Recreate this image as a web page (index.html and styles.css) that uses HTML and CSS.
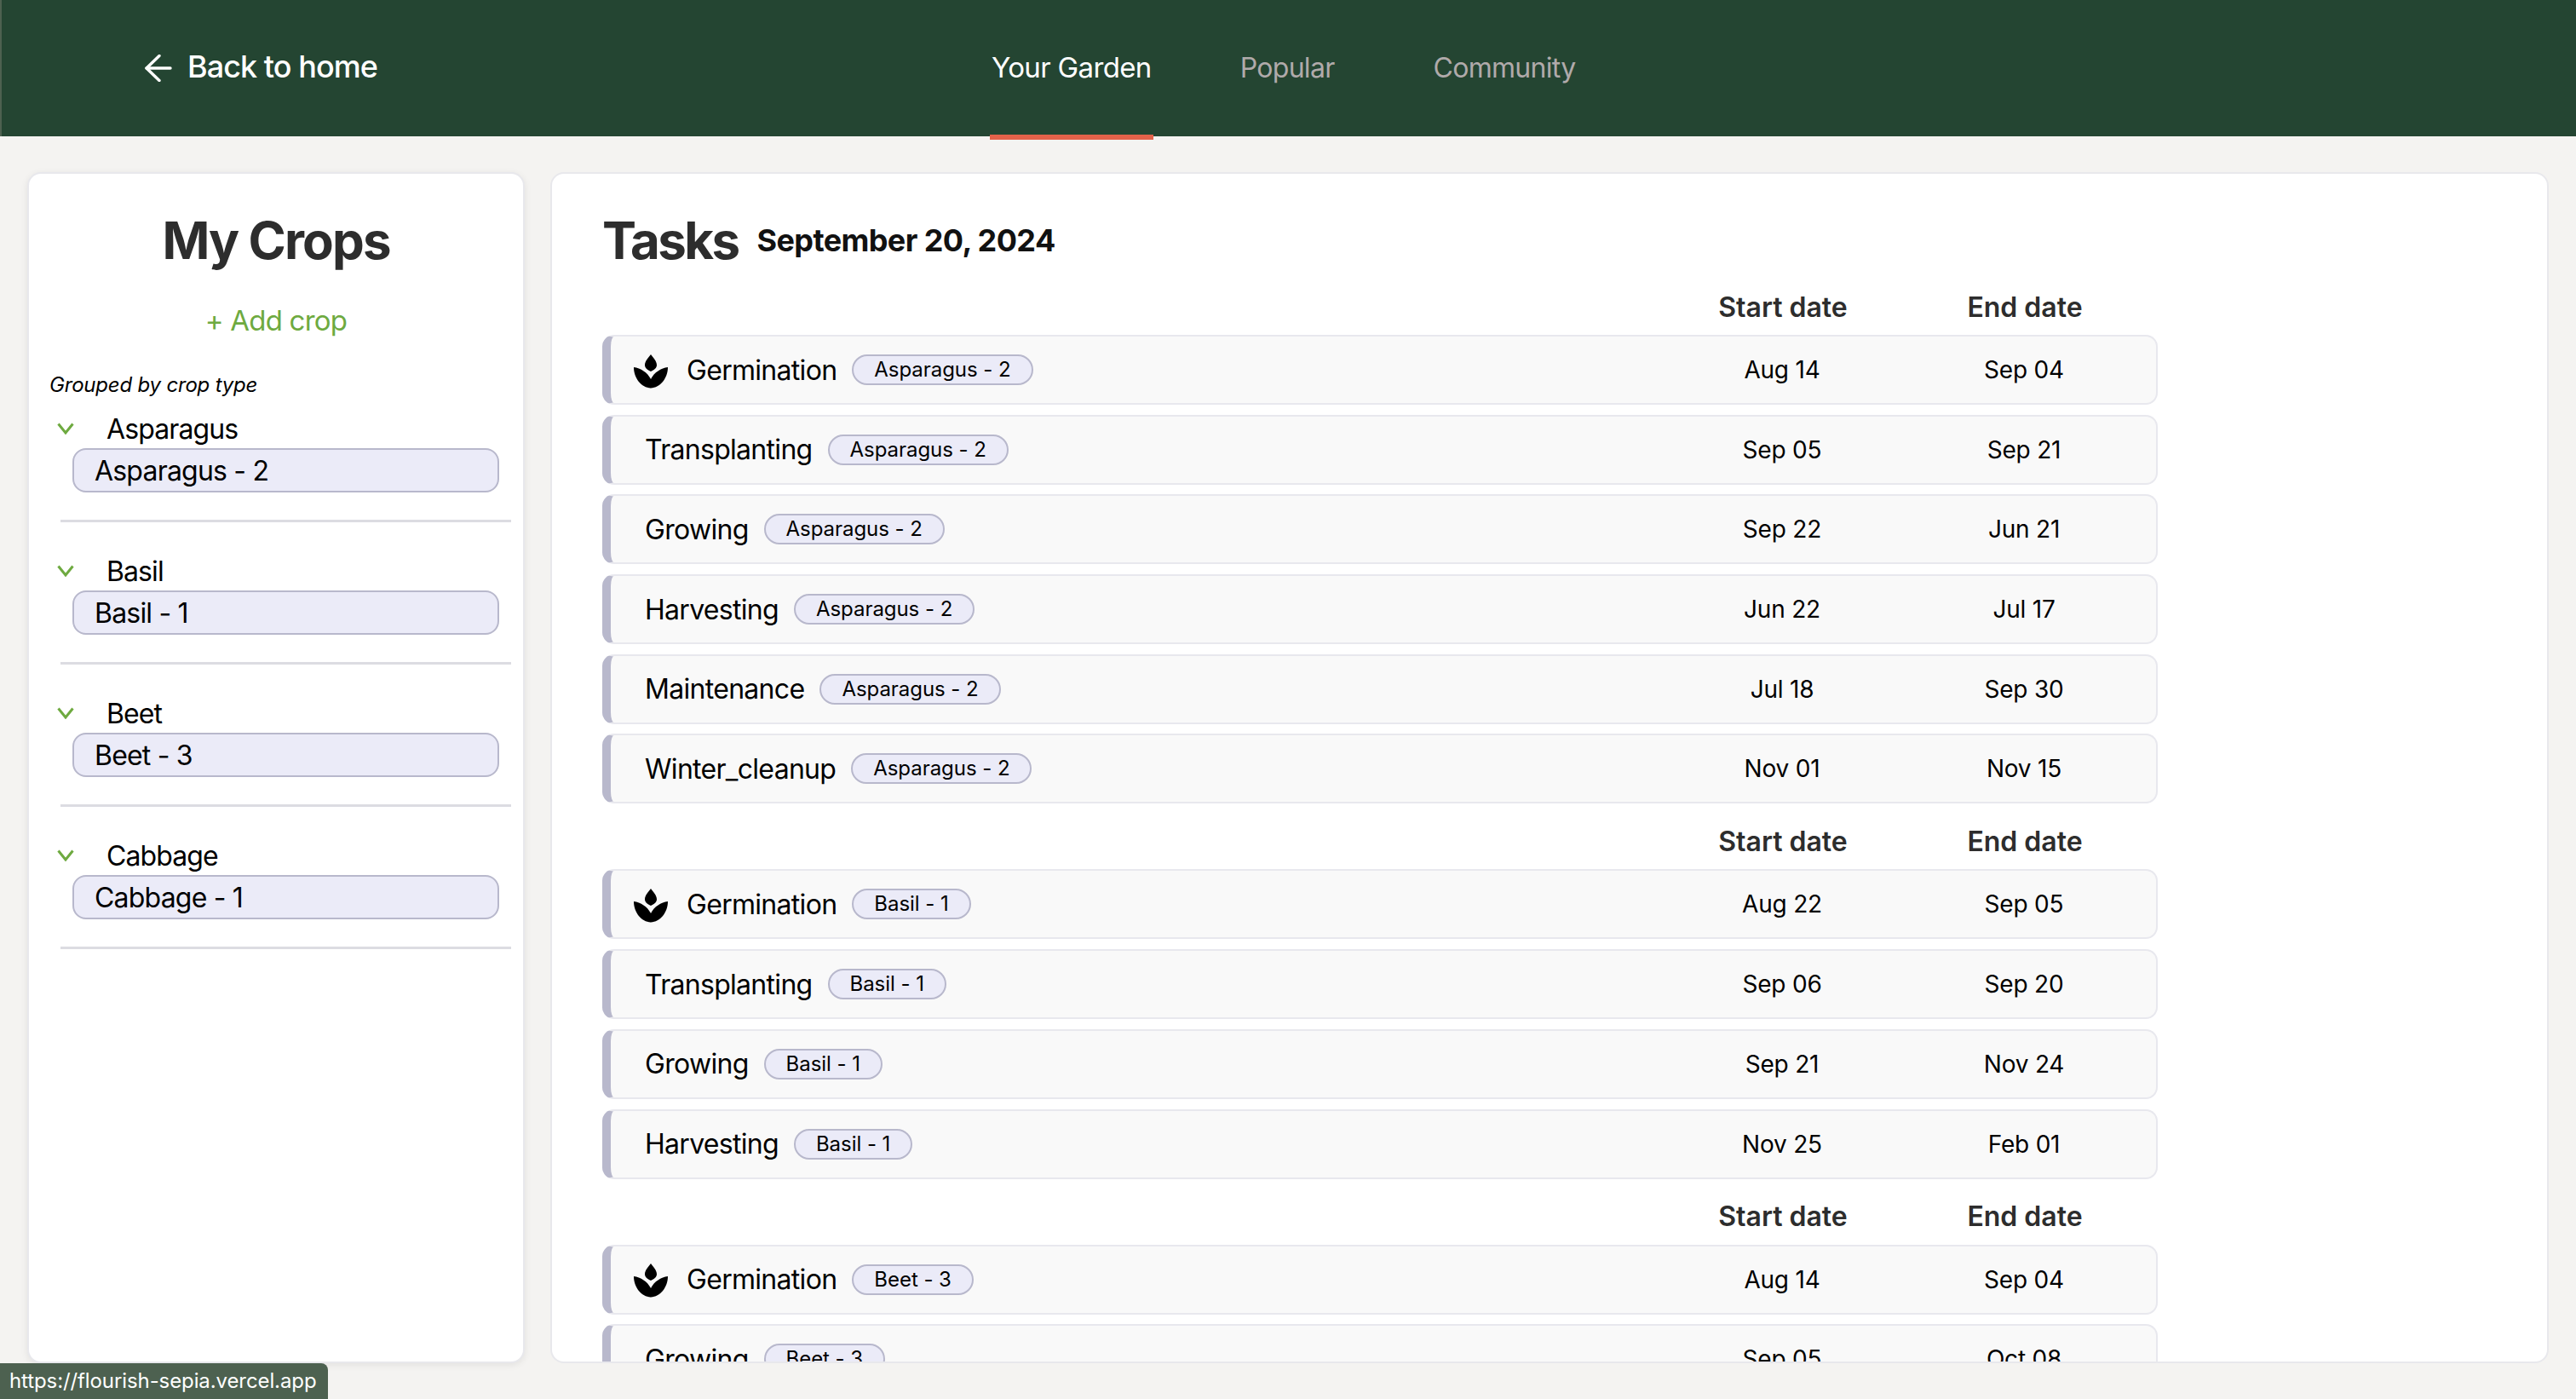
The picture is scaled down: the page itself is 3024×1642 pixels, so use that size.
FILE: index.html
```html
<!DOCTYPE html>
<html lang="en">
<head>
  <meta charset="UTF-8">
  <meta name="viewport" content="width=device-width, initial-scale=1.0">
  <title>Your Garden</title>
  <link rel="stylesheet" href="styles.css">
</head>
<body>

<header class="topbar">
  <a class="back-link" href="#">
    <svg class="back-arrow" viewBox="0 0 32 32" fill="none" stroke="#fff" stroke-width="3.400" stroke-linecap="round" stroke-linejoin="round"><path d="M30 16H2"/><path d="M17 1.500 2 16 17 30.500"/></svg>
    Back to home
  </a>
  <nav class="tabs">
    <a class="tab tab-active" href="#">Your Garden</a>
    <a class="tab" href="#">Popular</a>
    <a class="tab tab-last" href="#">Community</a>
  </nav>
</header>

<main class="content">
  <aside class="card sidebar">
    <h1 class="sidebar-title">My Crops</h1>
    <a class="add-crop" href="#">+ Add crop</a>
    <p class="group-note">Grouped by crop type</p>

    <section class="crop-group">
      <div class="crop-type">
        <svg class="chevron" viewBox="0 0 20 14" fill="none" stroke="#6eaa40" stroke-width="3"><path d="M1.500 1.500 10 12 18.500 1.500"/></svg>
        Asparagus
      </div>
      <div class="crop-item">Asparagus - 2</div>
    </section>
    <section class="crop-group">
      <div class="crop-type">
        <svg class="chevron" viewBox="0 0 20 14" fill="none" stroke="#6eaa40" stroke-width="3"><path d="M1.500 1.500 10 12 18.500 1.500"/></svg>
        Basil
      </div>
      <div class="crop-item">Basil - 1</div>
    </section>
    <section class="crop-group">
      <div class="crop-type">
        <svg class="chevron" viewBox="0 0 20 14" fill="none" stroke="#6eaa40" stroke-width="3"><path d="M1.500 1.500 10 12 18.500 1.500"/></svg>
        Beet
      </div>
      <div class="crop-item">Beet - 3</div>
    </section>
    <section class="crop-group">
      <div class="crop-type">
        <svg class="chevron" viewBox="0 0 20 14" fill="none" stroke="#6eaa40" stroke-width="3"><path d="M1.500 1.500 10 12 18.500 1.500"/></svg>
        Cabbage
      </div>
      <div class="crop-item">Cabbage - 1</div>
    </section>
  </aside>

  <section class="card tasks">
    <div class="tasks-head">
      <h1 class="tasks-title">Tasks</h1>
      <span class="tasks-date">September 20, 2024</span>
    </div>

    <div class="task-group">
      <div class="task-cols"><span class="cols-spacer"></span><span>Start date</span><span>End date</span></div>
      <div class="task-row">
        <div class="task-name">
          <svg class="sprout" viewBox="0 0 40 40" fill="#000"><path d="M20 0C23 4 27 8 27 12.500 27 16 24 18 20 20 16 18 13 16 13 12.500 13 8 17 4 20 0Z"/><path d="M0 15C8 16 16 21 20 29 24 21 32 16 40 15 40 28 31 39 20 39.500 9 39 0 28 0 15Z"/></svg>
          Germination <span class="crop-tag">Asparagus - 2</span>
        </div>
        <span>Aug 14</span><span>Sep 04</span>
      </div>
      <div class="task-row"><div class="task-name task-plain">Transplanting <span class="crop-tag">Asparagus - 2</span></div><span>Sep 05</span><span>Sep 21</span></div>
      <div class="task-row"><div class="task-name task-plain">Growing <span class="crop-tag">Asparagus - 2</span></div><span>Sep 22</span><span>Jun 21</span></div>
      <div class="task-row"><div class="task-name task-plain">Harvesting <span class="crop-tag">Asparagus - 2</span></div><span>Jun 22</span><span>Jul 17</span></div>
      <div class="task-row"><div class="task-name task-plain">Maintenance <span class="crop-tag">Asparagus - 2</span></div><span>Jul 18</span><span>Sep 30</span></div>
      <div class="task-row"><div class="task-name task-plain">Winter_cleanup <span class="crop-tag">Asparagus - 2</span></div><span>Nov 01</span><span>Nov 15</span></div>
    </div>

    <div class="task-group">
      <div class="task-cols"><span class="cols-spacer"></span><span>Start date</span><span>End date</span></div>
      <div class="task-row">
        <div class="task-name">
          <svg class="sprout" viewBox="0 0 40 40" fill="#000"><path d="M20 0C23 4 27 8 27 12.500 27 16 24 18 20 20 16 18 13 16 13 12.500 13 8 17 4 20 0Z"/><path d="M0 15C8 16 16 21 20 29 24 21 32 16 40 15 40 28 31 39 20 39.500 9 39 0 28 0 15Z"/></svg>
          Germination <span class="crop-tag">Basil - 1</span>
        </div>
        <span>Aug 22</span><span>Sep 05</span>
      </div>
      <div class="task-row"><div class="task-name task-plain">Transplanting <span class="crop-tag">Basil - 1</span></div><span>Sep 06</span><span>Sep 20</span></div>
      <div class="task-row"><div class="task-name task-plain">Growing <span class="crop-tag">Basil - 1</span></div><span>Sep 21</span><span>Nov 24</span></div>
      <div class="task-row"><div class="task-name task-plain">Harvesting <span class="crop-tag">Basil - 1</span></div><span>Nov 25</span><span>Feb 01</span></div>
    </div>

    <div class="task-group">
      <div class="task-cols"><span class="cols-spacer"></span><span>Start date</span><span>End date</span></div>
      <div class="task-row">
        <div class="task-name">
          <svg class="sprout" viewBox="0 0 40 40" fill="#000"><path d="M20 0C23 4 27 8 27 12.500 27 16 24 18 20 20 16 18 13 16 13 12.500 13 8 17 4 20 0Z"/><path d="M0 15C8 16 16 21 20 29 24 21 32 16 40 15 40 28 31 39 20 39.500 9 39 0 28 0 15Z"/></svg>
          Germination <span class="crop-tag">Beet - 3</span>
        </div>
        <span>Aug 14</span><span>Sep 04</span>
      </div>
      <div class="task-row"><div class="task-name task-plain">Growing <span class="crop-tag">Beet - 3</span></div><span>Sep 05</span><span>Oct 08</span></div>
    </div>
  </section>
</main>

<div class="status-url">https://flourish-sepia.vercel.app</div>

</body>
</html>
```

FILE: styles.css
```css
* {
  box-sizing: border-box;
}

html, body {
  height: 100%;
}

body {
  font-family: Inter, "Liberation Sans", sans-serif;
  background-color: #f4f3f1;
  color: #000;
  margin: 0;
  overflow: hidden;
}

a {
  text-decoration: none;
  color: inherit;
}

h1, p {
  margin: 0;
}

/* top bar */
.topbar {
  display: flex;
  height: 160px;
  background-color: #244532;
  border-left: 2px solid #4d6150;
}

.back-link {
  display: flex;
  align-items: center;
  gap: 18px;
  width: 990px;
  height: 156px;
  padding-left: 168px;
  color: #fff;
  font-size: 36px;
  font-weight: 500;
  letter-spacing: -0.95px;
}

.back-arrow {
  width: 32px;
  height: 32px;
  margin-top: 4px;
}

.tabs {
  display: flex;
  gap: 100px;
  margin-left: 170px;
}

.tab {
  display: flex;
  align-items: center;
  height: 164px;
  padding: 0 2px;
  border-bottom: 6px solid transparent;
  color: #b0aaaa;
  font-size: 32px;
  letter-spacing: -0.7px;
}

.tab-active {
  color: #fff;
  font-size: 33px;
  letter-spacing: -0.65px;
  border-bottom-color: #e4624a;
}

.tab-last {
  margin-left: 12px;
}

/* page body */
.content {
  display: flex;
  gap: 30px;
  height: 1482px;
  padding: 42px 32px;
}

.card {
  background-color: #fff;
  border: 2px solid #e8e8ec;
  border-radius: 16px;
  overflow: hidden;
}

.sidebar {
  flex: 0 0 584px;
  padding: 42px 14px 0 24px;
  box-shadow: 0 2px 8px rgba(0, 0, 0, 0.08);
}

.sidebar-title {
  color: #2d2d2d;
  font-size: 60px;
  font-weight: 700;
  letter-spacing: -1.9px;
  line-height: 72px;
  text-align: center;
  margin-right: 10px;
}

.add-crop {
  display: block;
  margin: 36px 10px 38px 0;
  color: #6eaa40;
  font-size: 33px;
  letter-spacing: -0.8px;
  line-height: 44px;
  text-align: center;
}

.group-note {
  font-size: 24px;
  font-style: italic;
  letter-spacing: -0.2px;
  line-height: 32px;
  margin-bottom: 15px;
}

.crop-group {
  height: 167px;
}

.crop-group::after {
  content: "";
  display: block;
  height: 3px;
  margin: 32px 0 0 13px;
  background-color: #dcdce2;
}

.crop-type {
  display: flex;
  align-items: center;
  height: 40px;
  font-size: 32px;
  letter-spacing: -0.9px;
  margin-bottom: 3px;
}

.chevron {
  width: 20px;
  height: 14px;
  margin: 0 38px 0 9px;
}

.crop-item {
  height: 52px;
  margin: 0 14px 0 27px;
  padding-left: 24px;
  background-color: #ebebf8;
  border: 2px solid #b8b8cc;
  border-radius: 16px;
  font-size: 32px;
  letter-spacing: -0.8px;
  line-height: 50px;
}

/* tasks */
.tasks {
  flex: 1;
  padding: 42px 0 0 59px;
}

.tasks-head {
  display: flex;
  align-items: center;
  gap: 22px;
  height: 72px;
  margin-bottom: 22px;
}

.tasks-title {
  color: #2d2d2d;
  font-size: 60px;
  font-weight: 700;
  letter-spacing: -2.600px;
}

.tasks-date {
  font-size: 36px;
  font-weight: 700;
  letter-spacing: -0.6px;
  color: #111;
}

.task-group {
  width: 1826px;
  margin-bottom: 24px;
}

.task-cols,
.task-row {
  display: grid;
  grid-template-columns: 1fr 284px 284px;
  align-items: center;
  text-align: center;
}

.task-cols {
  height: 40px;
  margin-bottom: 13px;
  padding: 0 14px 0 10px;
  color: #2d2d2d;
  font-size: 32px;
  font-weight: 600;
}

.task-row {
  height: 82px;
  margin-bottom: 11.700px;
  padding-right: 13px;
  background-color: #f9f9f9;
  border: 2px solid #e8e8ee;
  border-left: 10px solid #b8b8cc;
  border-radius: 14px;
  font-size: 28px;
  letter-spacing: -0.2px;
}

.task-name {
  display: flex;
  align-items: center;
  gap: 18px;
  padding-left: 27px;
  font-size: 32px;
  letter-spacing: -0.7px;
  text-align: left;
}

.task-plain {
  padding-left: 40px;
}

.sprout {
  width: 40px;
  height: 40px;
  margin: 3px 4px 0 0;
}

.crop-tag {
  height: 36px;
  padding: 0 24px;
  background-color: #ebebf8;
  border: 2px solid #b8b8cc;
  border-radius: 18px;
  font-size: 24px;
  letter-spacing: -0.05px;
  line-height: 32px;
}

/* browser link preview */
.status-url {
  position: fixed;
  left: 0;
  bottom: 0;
  width: 385px;
  height: 42px;
  padding-left: 11px;
  background-color: #4d6150;
  border-top-right-radius: 8px;
  color: #fff;
  font-size: 24px;
  letter-spacing: -0.1px;
  line-height: 42px;
}
```
